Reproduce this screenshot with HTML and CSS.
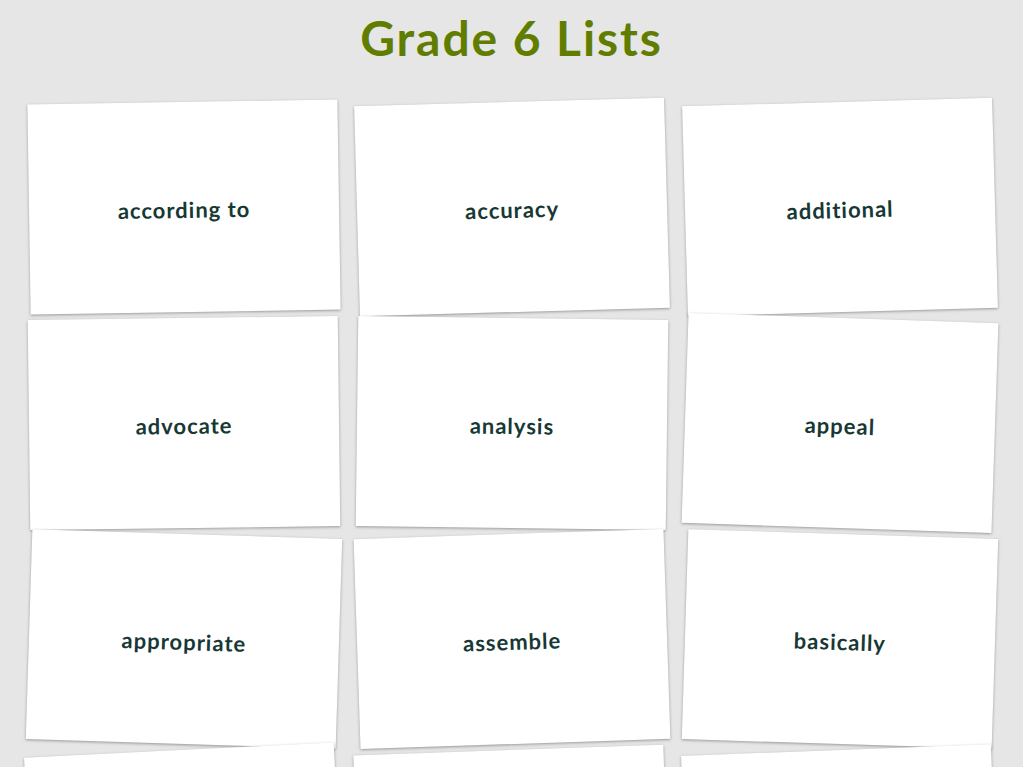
FILE: index.html
```html
<!DOCTYPE html>
<html lang="en">
<head>
    <meta charset="UTF-8">
    <meta name="viewport" content="width=device-width, initial-scale=1.0">
    <title>Grade 6 Lists</title>
    <link rel="stylesheet" href="styles.css">
</head>
<body>
    <h1>Grade 6 Lists</h1>

    <div class="cards">
        <div class="card"><span>according to</span></div>
        <div class="card"><span>accuracy</span></div>
        <div class="card"><span>additional</span></div>
        <div class="card"><span>advocate</span></div>
        <div class="card"><span>analysis</span></div>
        <div class="card"><span>appeal</span></div>
        <div class="card"><span>appropriate</span></div>
        <div class="card"><span>assemble</span></div>
        <div class="card"><span>basically</span></div>
        <!-- next row only peeks in at the bottom edge -->
        <div class="card"></div>
        <div class="card"></div>
        <div class="card"></div>
    </div>
</body>
</html>
```

FILE: styles.css
```css
body {
    margin: 0;
    background-color: #e6e6e6;
    font-family: Lato, "Liberation Sans", sans-serif;
    overflow: hidden;
}
h1 {
    margin: 0;
    padding-top: 14px;
    font-size: 48px;
    line-height: 1;
    font-weight: 700;
    letter-spacing: 0.04em;
    color: #617d00;
    text-align: center;
}
.cards {
    display: grid;
    grid-template-columns: repeat(3, 310px);
    column-gap: 18px;
    row-gap: 6px;
    justify-content: center;
    margin-top: 40px;
}
.card {
    box-sizing: border-box;
    height: 210px;
    padding-top: 4px;
    background: #fff;
    box-shadow: 0 1px 3px rgba(0,0,0,0.35);
    display: flex;
    align-items: center;
    justify-content: center;
    font-size: 22px;
    font-weight: 700;
    letter-spacing: 0.045em;
    color: #173835;
}
.card:nth-child(1) { transform: rotate(-0.9deg); }
.card:nth-child(2) { transform: rotate(-1.6deg); }
.card:nth-child(3) { transform: rotate(-1.6deg); }
.card:nth-child(4) { transform: rotate(-0.7deg); }
.card:nth-child(5) { transform: rotate(0.7deg); }
.card:nth-child(6) { transform: rotate(1.9deg); }
.card:nth-child(7) { transform: rotate(1.8deg); }
.card:nth-child(8) { transform: rotate(-1.9deg); }
.card:nth-child(9) { transform: rotate(1.8deg); }
.card:nth-child(10) { transform: rotate(-2.8deg); }
.card:nth-child(11) { transform: rotate(-2deg); }
.card:nth-child(12) { transform: rotate(-2.2deg); }
```
